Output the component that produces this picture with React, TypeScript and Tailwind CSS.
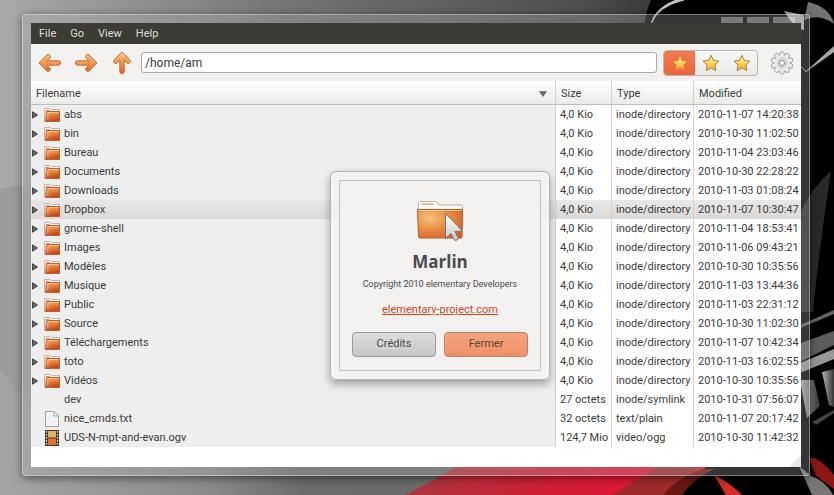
import { useState } from 'react';

type Kind = 'folder' | 'link' | 'text' | 'video';

type Entry = {
  name: string;
  kind: Kind;
  size: string;
  type: string;
  modified: string;
};

const folder = (name: string, modified: string): Entry => ({
  name,
  kind: 'folder',
  size: '4,0 Kio',
  type: 'inode/directory',
  modified,
});

const entries: Entry[] = [
  folder('abs', '2010-11-07 14:20:38'),
  folder('bin', '2010-10-30 11:02:50'),
  folder('Bureau', '2010-11-04 23:03:46'),
  folder('Documents', '2010-10-30 22:28:22'),
  folder('Downloads', '2010-11-03 01:08:24'),
  folder('Dropbox', '2010-11-07 10:30:47'),
  folder('gnome-shell', '2010-11-04 18:53:41'),
  folder('Images', '2010-11-06 09:43:21'),
  folder('Modèles', '2010-10-30 10:35:56'),
  folder('Musique', '2010-11-03 13:44:36'),
  folder('Public', '2010-11-03 22:31:12'),
  folder('Source', '2010-10-30 11:02:30'),
  folder('Téléchargements', '2010-11-07 10:42:34'),
  folder('toto', '2010-11-03 16:02:55'),
  folder('Vidéos', '2010-10-30 10:35:56'),
  { name: 'dev', kind: 'link', size: '27 octets', type: 'inode/symlink', modified: '2010-10-31 07:56:07' },
  { name: 'nice_cmds.txt', kind: 'text', size: '32 octets', type: 'text/plain', modified: '2010-11-07 20:17:42' },
  { name: 'UDS-N-mpt-and-evan.ogv', kind: 'video', size: '124,7 Mio', type: 'video/ogg', modified: '2010-10-30 11:42:32' },
];

function Wallpaper() {
  return (
    <svg className="absolute inset-0 h-full w-full" viewBox="0 0 834 495" preserveAspectRatio="none" aria-hidden="true">
      <defs>
        <linearGradient id="top" x1="0" x2="1" y1="0" y2="0">
          <stop offset="0" stopColor="#a9a9a9" />
          <stop offset="0.13" stopColor="#969696" />
          <stop offset="0.35" stopColor="#747474" />
          <stop offset="0.7" stopColor="#4e4e4e" />
          <stop offset="0.78" stopColor="#3a3a3a" />
          <stop offset="1" stopColor="#000" />
        </linearGradient>
        <linearGradient id="low" x1="0" x2="1" y1="0" y2="0">
          <stop offset="0" stopColor="#a4a4a4" />
          <stop offset="0.25" stopColor="#8a8a8a" />
          <stop offset="0.36" stopColor="#6c6c6c" />
          <stop offset="0.6" stopColor="#6a6a6a" />
        </linearGradient>
        <linearGradient id="red" x1="0" x2="1" y1="0" y2="0">
          <stop offset="0" stopColor="#a8383e" />
          <stop offset="0.45" stopColor="#d01f35" />
          <stop offset="1" stopColor="#ea0f36" />
        </linearGradient>
        <linearGradient id="tooth" x1="0" x2="1" y1="0" y2="0">
          <stop offset="0" stopColor="#b4b4b4" />
          <stop offset="1" stopColor="#333" />
        </linearGradient>
      </defs>
      <rect width="834" height="495" fill="url(#top)" />
      <rect y="250" width="834" height="245" fill="url(#low)" />
      <path d="M0 20Q10 19 22 13V185L0 189Z" fill="#a8a8a8" />
      <path d="M0 189l40-6v230Q15 390 0 369Z" fill="#9c9c9c" />
      <path d="M651 0Q646 12 644 26V495h190V0Z" fill="#000" />
      <path d="M651 24Q658 6 684 0h-8Q655 8 651 24Z" fill="#c5c5c5" stroke="#c5c5c5" />
      <path d="M808 2Q830 7 834 24 820 13 804 20Z" fill="#727272" />
      <path d="M784 11l20 4v15q-9-1-20-19Z" fill="#aaa" />
      <path d="M801 66l5 5 28-25v6l-28 20-5-5Z" fill="#a5a5a5" />
      <path d="M794 240Q798 200 831 171 819 250 813 312H796Z" fill="#292929" />
      <path d="M798 326l36-16v4l-36 15Z" fill="#626262" />
      <path d="M798 344l36-13v14l-36 18Z" fill="#5d5d5d" />
      <path d="M800 363l34-14v10l-34 14Z" fill="#979797" />
      <path d="M800 380h14l6 26-13 12Z" fill="url(#tooth)" />
      <path d="M822 372l12-3v38l-5-2Z" fill="url(#tooth)" />
      <path d="M812 422l22-12v3l-18 12Z" fill="#444" />
      <path d="M809 458q10-2 25 17v14l-18-13Z" fill="#8d1815" />
      <path d="M405 495q45-23 62-35h250l-52 35Z" fill="url(#red)" />
      <path d="M612 495q40-25 60-36h50q-38 12-57 36Z" fill="#9e2b2c" />
      <path d="M663 495q9-12 29-22 13-5 22-4-22 11-32 26Z" fill="#6a1813" />
      <path d="M714 475q15 7 28 20h-16Z" fill="#d52c26" />
      <path d="M799 466l12 10q15 5 22 19h-21Z" fill="#777" />
    </svg>
  );
}

function ArrowIcon({ turn }: { turn: 'left' | 'right' | 'up' }) {
  const rotation = { left: 'rotate(180 12 12)', right: '', up: 'rotate(-90 12 12)' }[turn];
  return (
    <svg className="h-6 w-6" viewBox="0 0 24 24" aria-hidden="true">
      <defs>
        <linearGradient id={`arrow-${turn}`} gradientUnits="userSpaceOnUse" x1="0" y1="0" x2="0" y2="24" gradientTransform={turn === 'up' ? 'rotate(90 12 12)' : turn === 'left' ? 'rotate(180 12 12)' : undefined}>
          <stop offset="0.1" stopColor="#fbc289" />
          <stop offset="0.5" stopColor="#f6974d" />
          <stop offset="0.9" stopColor="#e4632c" />
        </linearGradient>
      </defs>
      <path
        transform={rotation}
        d="M3 9.800H15.200L11.800 6.800Q11 5.700 11.800 4.800L12.900 3.700Q13.800 3 14.700 3.800L22.400 11.200Q23 12 22.400 12.800L14.700 20.200Q13.800 21 12.900 20.300L11.800 19.200Q11 18.300 11.800 17.200L15.200 14.200H3Q1.400 14 1.400 12T3 9.800Z"
        fill={`url(#arrow-${turn})`}
        stroke="#b8713f"
        strokeWidth="1"
        strokeLinejoin="round"
      />
    </svg>
  );
}

function StarIcon({ pale }: { pale?: boolean }) {
  return (
    <svg className="h-[18px] w-[18px]" viewBox="0 0 18 18" aria-hidden="true">
      <defs>
        <linearGradient id="star" x1="0" y1="0" x2="0" y2="1">
          <stop offset="0" stopColor="#fff0a0" />
          <stop offset="0.55" stopColor="#fcd057" />
          <stop offset="1" stopColor="#f5a52c" />
        </linearGradient>
      </defs>
      <path
        d={
          pale
            ? 'M9 2.500l2.100 4.400 4.700.7-3.400 3.400.8 4.700L9 13.500l-4.200 2.200.8-4.700L2.200 7.600l4.700-.7Z'
            : 'M9 1.300l2.300 5 5.600.8-4 3.900 1 5.600-4.900-2.700-4.900 2.700 1-5.600-4-3.900 5.600-.8Z'
        }
        fill="url(#star)"
        stroke={pale ? '#e99a45' : '#a88248'}
        strokeWidth={pale ? 0.6 : 1}
        strokeLinejoin="round"
      />
    </svg>
  );
}

function GearIcon() {
  const teeth = [0, 36, 72, 108, 144, 180, 216, 252, 288, 324];
  return (
    <svg className="h-6 w-6" viewBox="0 0 24 24" aria-hidden="true">
      {teeth.map(a => (
        <rect key={a} x="9.800" y="1" width="4.400" height="6" rx="1.600" transform={`rotate(${a} 12 12)`} fill="#ebebeb" stroke="#9b9b9b" strokeWidth="0.900" />
      ))}
      <circle cx="12" cy="12" r="8" fill="#e9e9e9" />
      <circle cx="12" cy="12" r="4.800" fill="#dadada" stroke="#c2c2c2" strokeWidth="0.800" />
      <circle cx="12" cy="12" r="2.600" fill="#f7f7f7" stroke="#8e8e8e" strokeWidth="1" />
    </svg>
  );
}

function FileIcon({ kind }: { kind: Kind }) {
  if (kind === 'folder') {
    return (
      <svg className="h-4 w-4 shrink-0" viewBox="0 0 16 16" aria-hidden="true">
        <defs>
          <linearGradient id="folder" x1="0" y1="0" x2="0.300" y2="1">
            <stop offset="0" stopColor="#f6b570" />
            <stop offset="0.500" stopColor="#e5803c" />
            <stop offset="1" stopColor="#bf4a1a" />
          </linearGradient>
        </defs>
        <path d="M.5 14.500V1.500H6l1 1h8.500V5" fill="#fcfaf8" stroke="#c4b3a8" />
        <path d="M.8 14.500Q2 12 2.200 3.500h3.300" fill="none" stroke="#e08850" />
        <path d="M1.500 14.500Q2.800 13 3 4.500h12.500v10Z" fill="url(#folder)" stroke="#bd5f2e" />
        <path d="M3.800 12.500v-7h11" fill="none" stroke="#ffd9ab" strokeOpacity="0.600" />
      </svg>
    );
  }
  if (kind === 'text') {
    return (
      <svg className="h-4 w-4 shrink-0" viewBox="0 0 16 16" aria-hidden="true">
        <path d="M1.500.5h8.500l4.500 4.500v10.500h-13Z" fill="#f1f1f2" stroke="#a4a4a4" />
        <path d="M10 .5V5h4.500Z" fill="#fff" stroke="#a4a4a4" />
      </svg>
    );
  }
  if (kind === 'video') {
    return (
      <svg className="h-4 w-4 shrink-0" viewBox="0 0 16 16" aria-hidden="true">
        <rect x="1" width="14" height="16" fill="#453a2d" />
        <rect x="4" y="1" width="8" height="6.500" fill="#e6b15e" />
        <rect x="4" y="8.500" width="8" height="6.500" fill="#e96f30" />
        <path d="M2.500 1v15M13.500 1v15" stroke="#f2eee4" strokeWidth="1.200" strokeDasharray="1.500 1.500" />
      </svg>
    );
  }
  return <span className="h-4 w-4 shrink-0" />;
}

function FolderLogo() {
  return (
    <svg className="h-[44px] w-12" viewBox="0 0 48 44" aria-hidden="true">
      <defs>
        <radialGradient id="logo" cx="0.280" cy="0.300" r="0.900">
          <stop offset="0" stopColor="#f6c07c" />
          <stop offset="0.450" stopColor="#e88f45" />
          <stop offset="1" stopColor="#d35a22" />
        </radialGradient>
        <linearGradient id="pointer" x1="0" y1="0" x2="0" y2="1">
          <stop offset="0" stopColor="#fff" />
          <stop offset="1" stopColor="#c9c9c9" />
        </linearGradient>
      </defs>
      <path d="M2.500 12V4.500Q2.500 3.500 3.500 3.500H19q1.500 0 2.500 1.500l1.500 2H45q1.500 0 1.500 1.500V12Z" fill="#fbfaf8" stroke="#bdb3aa" />
      <path d="M5.500 6h12" stroke="#e3ab77" strokeWidth="1.500" />
      <path d="M1.500 11.500h45l-.5 27q0 1.500-1.500 1.500H4q-1.500 0-1.500-1.500Z" fill="url(#logo)" stroke="#b35c2c" />
      <path d="M2.500 12.500h43" stroke="#fad2a0" strokeOpacity="0.700" />
      <path d="M29.500 15.500v25l5.500-5 3 6q1 1.500 3 .5 1.500-1 1-2.500l-3-6 7.500-.5Z" fill="url(#pointer)" stroke="#77706b" strokeLinejoin="round" />
    </svg>
  );
}

function AboutDialog({ onClose }: { onClose: () => void }) {
  return (
    <div
      role="dialog"
      aria-label="Marlin"
      className="absolute top-[171px] left-[330px] w-[220px] rounded-md border border-[#b5b5b5] bg-[#f2f2f2]/85 p-2 shadow-[0_4px_8px_rgba(0,0,0,0.35)]"
    >
      <div className="flex flex-col items-center border border-[#c6c6c6] bg-[#f2f1f0] px-3 pt-[17px] pb-[13px]">
        <FolderLogo />
        <h1 className="mt-2 font-['Open_Sans','Noto_Sans',sans-serif] text-[17px] leading-6 font-bold text-[#4a4a4a]">Marlin</h1>
        <p className="mt-1 text-[9px] leading-3 whitespace-nowrap text-[#4c4c4c]">Copyright 2010 elementary Developers</p>
        <a href="#" className="mt-3 text-[11px] leading-4 text-[#d1481f] underline" onClick={e => e.preventDefault()}>
          elementary-project.com
        </a>
        <div className="mt-[14px] flex w-full gap-2">
          <button className="h-[25px] flex-1 rounded border border-[#9a9a9a] bg-linear-to-b from-[#dedede] to-[#c6c6c6] text-[11px] text-[#4c4c4c]">
            Crédits
          </button>
          <button
            className="h-[25px] flex-1 rounded border border-[#bd8268] bg-linear-to-b from-[#f3a37e] to-[#ef9168] text-[11px] text-[#65453a]"
            onClick={onClose}
          >
            Fermer
          </button>
        </div>
      </div>
    </div>
  );
}

const headCell = 'h-6 border-b border-[#bdbdb9] bg-linear-to-b from-white to-[#eaeae8] p-0 pt-[3px] text-left font-normal';
const cell = 'h-[19px] p-0 pl-1 leading-[19px] border-l border-[#d2d2d2]';

export default function App() {
  const [path, setPath] = useState('/home/am');
  const [view, setView] = useState(0);
  const [selected, setSelected] = useState('Dropbox');
  const [about, setAbout] = useState(true);

  return (
    <div className="relative min-h-screen overflow-hidden bg-[#777] pt-[14px] pr-6 pb-[19px] pl-[22px] font-[Roboto,'Noto_Sans',sans-serif] text-[11px] text-[#3c3c3c]">
      <Wallpaper />
      <div className="relative rounded border border-white/35 bg-[#b0b0b0]/30 p-2 shadow-[0_2px_8px_rgba(0,0,0,0.5)]">
        {/* window buttons, tucked into the frame */}
        <div className="absolute top-[2px] right-[14px] flex gap-1">
          <span className="h-[6px] w-[22px] bg-white/35" />
          <span className="h-[6px] w-[22px] bg-white/35" />
          <span className="h-[6px] w-[22px] bg-white/35" />
        </div>

        <div className="bg-white">
          <nav className="flex h-[21px] items-center gap-[14px] bg-[#3c3b37] px-2 pt-[2px] text-[#dfdbd2]">
            <button>File</button>
            <button>Go</button>
            <button>View</button>
            <button onClick={() => setAbout(true)}>Help</button>
          </nav>

          <div className="flex h-[37px] items-center bg-[#f2f1ef] px-[7px]">
            <div className="flex gap-3">
              <button aria-label="Back"><ArrowIcon turn="left" /></button>
              <button aria-label="Forward"><ArrowIcon turn="right" /></button>
              <button aria-label="Up"><ArrowIcon turn="up" /></button>
            </div>
            <input
              aria-label="Location"
              value={path}
              onChange={e => setPath(e.target.value)}
              className="ml-[7px] h-[21px] min-w-0 flex-1 rounded-[3px] border border-[#a9a9a7] bg-white px-[3px] text-xs outline-none"
            />
            <div className="ml-[6px] flex h-[26px] overflow-hidden rounded border border-[#b9b9b7] bg-linear-to-b from-[#f8f8f8] to-[#e9e9e8]">
              {['Icons', 'List', 'Columns'].map((label, i) => (
                <button
                  key={label}
                  aria-label={label}
                  aria-pressed={view === i}
                  onClick={() => setView(i)}
                  className={`flex w-[31px] items-center justify-center ${view === i ? 'bg-linear-to-b from-[#ef7a4d] to-[#e9683a]' : ''}`}
                >
                  <StarIcon pale={view === i} />
                </button>
              ))}
            </div>
            <button aria-label="Settings" className="ml-3"><GearIcon /></button>
          </div>

          <table className="w-full table-fixed border-separate border-spacing-0">
            <colgroup>
              <col />
              <col className="w-14" />
              <col className="w-[82px]" />
              <col className="w-[108px]" />
            </colgroup>
            <thead>
              <tr>
                <th className={headCell}>
                  <button className="flex w-full items-center justify-between pr-2 pl-[5px]">
                    Filename
                    <svg className="h-[6px] w-2" viewBox="0 0 8 6" aria-hidden="true"><path d="M.5.500h7L4 5.500Z" fill="#686868" stroke="#555" strokeWidth="0.500" /></svg>
                  </button>
                </th>
                {['Size', 'Type', 'Modified'].map(title => (
                  <th key={title} className={`${headCell} border-l border-l-[#d2d2d2]`}>
                    <button className="pl-[5px]">{title}</button>
                  </th>
                ))}
              </tr>
            </thead>
            <tbody>
              {entries.map(entry => (
                <tr
                  key={entry.name}
                  onClick={() => setSelected(entry.name)}
                  className={entry.name === selected ? 'bg-linear-to-b from-[#e9e8e6] to-[#dad9d7]' : ''}
                >
                  <td className={`h-[19px] p-0 leading-[19px] ${entry.name === selected ? '' : 'bg-[#eee]'}`}>
                    <div className="flex h-[19px] items-center pl-px">
                      <svg className="mr-[6px] h-2 w-[6px] shrink-0" viewBox="0 0 6 8" aria-hidden="true">
                        {entry.kind === 'folder' && <path d="M.5.800L5.500 4 .5 7.200Z" fill="#666" stroke="#444" />}
                      </svg>
                      <FileIcon kind={entry.kind} />
                      <span className="pl-1">{entry.name}</span>
                    </div>
                  </td>
                  <td className={cell}>{entry.size}</td>
                  <td className={`${cell} whitespace-nowrap`}>{entry.type}</td>
                  <td className={`${cell} whitespace-nowrap`}>{entry.modified}</td>
                </tr>
              ))}
            </tbody>
          </table>
          <div className="flex h-5 items-end justify-end">
            <svg className="h-3 w-3" viewBox="0 0 12 12" aria-hidden="true"><path d="M12 0v12H0Z" fill="#e8e8e8" /></svg>
          </div>
        </div>
      </div>
      {about && <AboutDialog onClose={() => setAbout(false)} />}
    </div>
  );
}
